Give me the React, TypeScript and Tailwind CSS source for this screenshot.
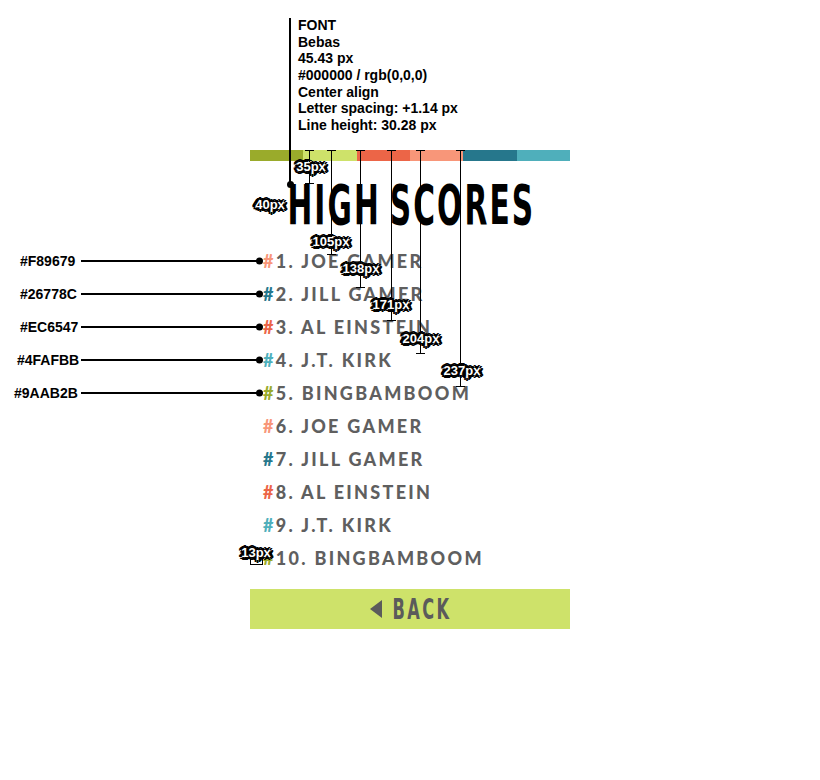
const scores = [
    { name: "1. JOE GAMER", hash: "text-[#F89679]" },
    { name: "2. JILL GAMER", hash: "text-[#26778C]" },
    { name: "3. AL EINSTEIN", hash: "text-[#EC6547]" },
    { name: "4. J.T. KIRK", hash: "text-[#4FAFBB]" },
    { name: "5. BINGBAMBOOM", hash: "text-[#9AAB2B]" },
    { name: "6. JOE GAMER", hash: "text-[#F89679]" },
    { name: "7. JILL GAMER", hash: "text-[#26778C]" },
    { name: "8. AL EINSTEIN", hash: "text-[#EC6547]" },
    { name: "9. J.T. KIRK", hash: "text-[#4FAFBB]" },
    { name: "10. BINGBAMBOOM", hash: "text-[#9AAB2B]" },
];

const swatches = [
    { label: "#F89679", y: "top-[261px]", left: "left-[20px]" },
    { label: "#26778C", y: "top-[294px]", left: "left-[20px]" },
    { label: "#EC6547", y: "top-[327px]", left: "left-[20px]" },
    { label: "#4FAFBB", y: "top-[360px]", left: "left-[17px]" },
    { label: "#9AAB2B", y: "top-[393px]", left: "left-[14px]" },
];

// vertical measure lines hanging from the colour bar
const measures = [
    { label: "35px", line: "left-[309px] h-[34px]", tag: "left-[311px] top-[166px]" },
    { label: "105px", line: "left-[331px] h-[105px]", tag: "left-[331px] top-[241px]" },
    { label: "138px", line: "left-[360px] h-[138px]", tag: "left-[361px] top-[268px]" },
    { label: "171px", line: "left-[391px] h-[171px]", tag: "left-[391px] top-[304px]" },
    { label: "204px", line: "left-[420px] h-[204px]", tag: "left-[421px] top-[338px]" },
    { label: "237px", line: "left-[460px] h-[237px]", tag: "left-[462px] top-[370px]" },
];

const tagText =
    "font-['Liberation_Sans',Arial,sans-serif] font-bold text-[13px] leading-none text-white [text-shadow:-2px_-2px_0_#000,2px_-2px_0_#000,-2px_2px_0_#000,2px_2px_0_#000,0_3px_0_#000,0_-3px_0_#000,3px_0_0_#000,-3px_0_0_#000,-3px_-1px_0_#000,3px_1px_0_#000]";

function Tag(props: { label: string; className: string }) {
    return (
        <div className={`absolute -translate-x-1/2 -translate-y-1/2 ${props.className} ${tagText}`}>
            {props.label}
        </div>
    );
}

export default function App() {
    return (
        <div className="relative w-[820px] h-[780px] bg-white overflow-hidden">
            {/* Screen */}
            <div className="mx-auto w-[320px] pt-[150px]">
                <div className="flex h-[11px]">
                    <div className="flex-1 bg-[#9AAB2B]"></div>
                    <div className="flex-1 bg-[#CEE26A]"></div>
                    <div className="flex-1 bg-[#EC6547]"></div>
                    <div className="flex-1 bg-[#F89679]"></div>
                    <div className="flex-1 bg-[#26778C]"></div>
                    <div className="flex-1 bg-[#4FAFBB]"></div>
                </div>

                <div className="mt-[24px] h-[40px] flex items-center justify-center">
                    <span className="inline-block whitespace-nowrap scale-x-[0.6] pl-[3.5px] font-['DejaVu_Sans_Condensed','DejaVu_Sans',sans-serif] font-bold text-[55px] leading-none tracking-[3.5px] [word-spacing:-6px] text-black">
                        HIGH SCORES
                    </span>
                </div>

                <ul className="mt-[20px] pl-[13px]">
                    {scores.map((s) => (
                        <li
                            key={s.name}
                            className="h-[33px] leading-[33px] whitespace-nowrap font-['Lato',sans-serif] font-black text-[18px] tracking-[2.3px] text-[#5f5f5f]"
                        >
                            <span className={s.hash}>#</span>
                            {s.name}
                        </li>
                    ))}
                </ul>

                <button className="mt-[14px] w-full h-[40px] bg-[#CEE26A] flex items-center justify-center gap-[10px]">
                    <svg width="12" height="18" viewBox="0 0 12 18">
                        <polygon points="12,0 12,18 0,9" fill="#5b5b5b" />
                    </svg>
                    <div className="w-[58px] flex justify-center">
                        <span className="inline-block whitespace-nowrap scale-x-[0.62] pl-[4px] font-['DejaVu_Sans_Condensed','DejaVu_Sans',sans-serif] font-bold text-[29px] leading-none tracking-[4px] text-[#5b5b5b]">
                            BACK
                        </span>
                    </div>
                </button>
            </div>

            {/* Font spec callout */}
            <div className="absolute left-[289px] top-[18px] w-[2px] h-[166px] bg-black"></div>
            <div className="absolute left-[287px] top-[181px] w-[7px] h-[7px] rounded-full bg-black"></div>
            <div className="absolute left-[298px] top-[17px] font-['Liberation_Sans',Arial,sans-serif] font-bold text-[14px] leading-[16.67px] text-black">
                <div>FONT</div>
                <div>Bebas</div>
                <div>45.43 px</div>
                <div>#000000 / rgb(0,0,0)</div>
                <div>Center align</div>
                <div>Letter spacing: +1.14 px</div>
                <div>Line height: 30.28 px</div>
            </div>

            {/* Measures */}
            {measures.map((m) => (
                <div key={m.label}>
                    <div className={`absolute top-[150px] w-px bg-black ${m.line}`}>
                        <div className="absolute -left-[4px] top-0 w-[9px] h-px bg-black"></div>
                        <div className="absolute -left-[4px] bottom-0 w-[9px] h-px bg-black"></div>
                    </div>
                    <Tag label={m.label} className={m.tag} />
                </div>
            ))}
            <Tag label="40px" className="left-[270px] top-[204px]" />
            <div className="absolute left-[250px] top-[559px] w-[13px] h-[6px] border-x border-b border-black"></div>
            <Tag label="13px" className="left-[256px] top-[552px]" />

            {/* Swatch callouts */}
            {swatches.map((s) => (
                <div key={s.label}>
                    <div
                        className={`absolute ${s.left} ${s.y} -translate-y-1/2 font-['Liberation_Sans',Arial,sans-serif] font-bold text-[14px] leading-none text-black`}
                    >
                        {s.label}
                    </div>
                    <div className={`absolute left-[81px] w-[178px] h-[2px] -translate-y-1/2 bg-black ${s.y}`}></div>
                    <div className={`absolute left-[256px] w-[7px] h-[7px] -translate-y-1/2 rounded-full bg-black ${s.y}`}></div>
                </div>
            ))}
        </div>
    );
}
